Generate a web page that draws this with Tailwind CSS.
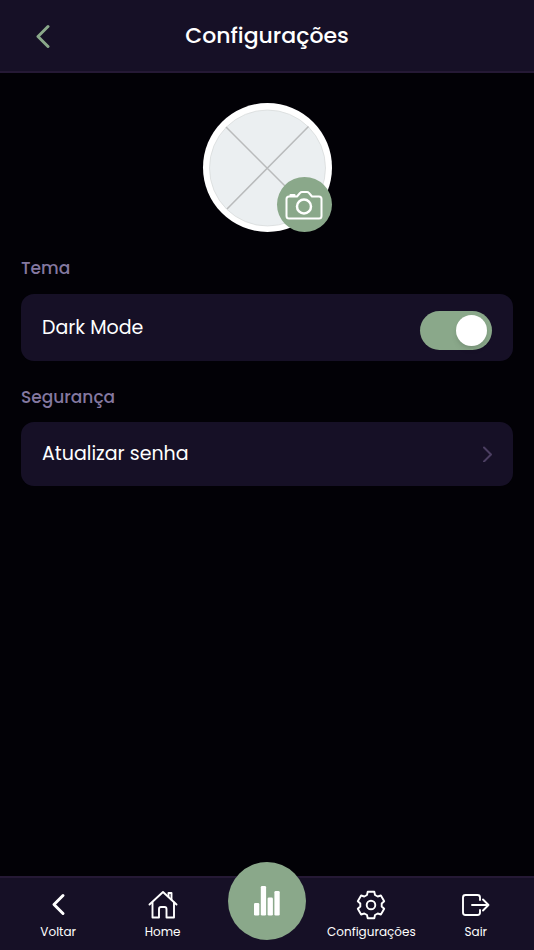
<!DOCTYPE html>
<html lang="pt-BR">
<head>
  <meta charset="UTF-8" />
  <meta name="viewport" content="width=device-width, initial-scale=1.0" />
  <title>Configurações</title>
  <script src="https://cdn.jsdelivr.net/npm/@tailwindcss/browser@4"></script>
</head>

<body class="min-h-screen flex flex-col bg-[#020106] text-white font-[Poppins,Inter,sans-serif]">
  <header class="grid grid-cols-[1fr_auto_1fr] items-center h-[73px] px-9 bg-[#161026] border-b-2 border-[#251935]">
    <a href="#" aria-label="Voltar" class="justify-self-start">
      <svg class="w-[14px] h-6" viewBox="0 0 14 24" fill="none" stroke="#8aa88a" stroke-width="3" stroke-linecap="round" stroke-linejoin="round"><path d="M12 2.500 2 12.500l10 10" /></svg>
    </a>
    <h1 class="text-[22px] leading-8 font-medium">Configurações</h1>
  </header>

  <main class="flex-1 px-[21px] pt-[30px]">
    <!-- Foto do perfil -->
    <div class="relative mx-auto size-[129px] rounded-full bg-white">
      <svg class="size-full" viewBox="0 0 129 129" fill="none">
        <circle cx="64.5" cy="65" r="58" fill="#ebeff1" stroke="#d5d8d9" stroke-width=".7" />
        <path d="M23 24 105 106M105.500 23.500 24 106" stroke="#b9bbbc" stroke-width="1.500" />
      </svg>
      <button type="button" aria-label="Alterar foto" class="absolute right-0 bottom-0 flex items-center justify-center size-[55px] rounded-full bg-[#8aa88a]">
        <svg class="w-[38px] h-[30px]" viewBox="0 0 38 30" fill="none" stroke="white" stroke-width="2" stroke-linejoin="round">
          <path d="M4 6.500h8l3-3.500q.8-1 2-1h5q1.200 0 2 1l3 3.500h7q2.500 0 2.500 2.500v17q0 2.500-2.500 2.500H4q-2.500 0-2.500-2.500V9Q1.500 6.500 4 6.500Z" />
          <path d="M5.500 6V5h4v1" />
          <circle cx="19" cy="16.500" r="7" stroke-width="2.500" />
        </svg>
      </button>
    </div>

    <h2 class="mt-6 text-[17px] leading-6 font-medium text-[#8478a0]">Tema</h2>
    <div class="mt-[14px] flex items-start justify-between rounded-[13px] bg-[#161026] px-[21px] pt-[17px] pb-[11px]">
      <label for="dark-mode" class="text-[19px] leading-[34px]">Dark Mode</label>
      <input id="dark-mode" type="checkbox" checked class="appearance-none cursor-pointer flex items-center w-[72px] h-[39px] px-[5px] rounded-full bg-[#4a3d61] checked:bg-[#8aa88a] checked:justify-end before:size-[31px] before:rounded-full before:bg-white before:shadow-md" />
    </div>

    <h2 class="mt-6 text-[17px] leading-6 font-medium text-[#8478a0]">Segurança</h2>
    <a href="#" class="mt-[13px] flex items-center justify-between rounded-[13px] bg-[#161026] px-[21px] py-[15px]">
      <span class="text-[19px] leading-[34px]">Atualizar senha</span>
      <svg class="w-[10px] h-4" viewBox="0 0 10 16" fill="none" stroke="#4b3e61" stroke-width="2" stroke-linecap="round" stroke-linejoin="round"><path d="m2 1.500 7 7-7 7" /></svg>
    </a>
  </main>

  <nav class="grid grid-cols-5 h-[74px] px-[6px] bg-[#161026] border-t-2 border-[#251935] text-[12px] leading-4">
    <a href="#" class="flex flex-col items-center gap-1 pt-3">
      <svg class="size-[30px]" viewBox="0 0 30 30" fill="none" stroke="white" stroke-width="3" stroke-linecap="round" stroke-linejoin="round"><path d="m20 5.500-9 9 9 9" /></svg>
      Voltar
    </a>
    <a href="#" class="flex flex-col items-center gap-1 pt-3">
      <svg class="size-[30px]" viewBox="0 0 30 30" fill="none" stroke="white" stroke-width="1.900" stroke-linecap="round" stroke-linejoin="round">
        <path d="M1.500 14.500 15 2l13.500 12.500" />
        <path d="M4.500 12.500v15H11V19Q11 17 13 17h3.500q2 0 2 2v8.500H26v-15" />
        <path d="M20.500 6.500V3h3v6.500" />
      </svg>
      Home
    </a>
    <a href="#" aria-label="Estatísticas" class="-mt-4 flex items-center justify-center justify-self-center size-[78px] rounded-full bg-[#8aa88a]">
      <svg class="w-[26px] h-[30px]" viewBox="0 0 26 30" fill="white">
        <rect x="0" y="17" width="5.300" height="12.500" rx="1.300" />
        <rect x="6.800" y="0" width="5.300" height="29.500" rx="1.300" />
        <rect x="13.600" y="11.500" width="5.300" height="18" rx="1.300" />
        <rect x="20.400" y="5" width="5.300" height="24.500" rx="1.300" />
      </svg>
    </a>
    <a href="#" class="flex flex-col items-center gap-1 pt-3">
      <svg class="size-[30px]" viewBox="0 0 30 30" fill="none" stroke="white" stroke-width="1.900" stroke-linejoin="round">
        <path d="M11.700 1.700h6.600L19 5l2.700 1.500 3.200-1 3.300 5.700-2.500 2.300v3l2.500 2.300-3.300 5.700-3.200-1L19 25l-.7 3.300h-6.600L11 25l-2.700-1.500-3.200 1-3.300-5.700 2.500-2.300v-3l-2.500-2.300 3.300-5.700 3.200 1L11 5Z" />
        <circle cx="15" cy="15" r="4.300" />
      </svg>
      Configurações
    </a>
    <a href="#" class="flex flex-col items-center gap-1 pt-3">
      <svg class="size-[30px]" viewBox="0 0 30 30" fill="none" stroke="white" stroke-width="1.900" stroke-linecap="round" stroke-linejoin="round">
        <path d="M19 10V7.500Q19 5 16.500 5H4.500Q2 5 2 7.500v15Q2 25 4.500 25h12q2.500 0 2.500-2.500V20" />
        <path d="M11 15h16.500M22 9.500l5.500 5.500-5.500 5.500" />
      </svg>
      Sair
    </a>
  </nav>
</body>
</html>
